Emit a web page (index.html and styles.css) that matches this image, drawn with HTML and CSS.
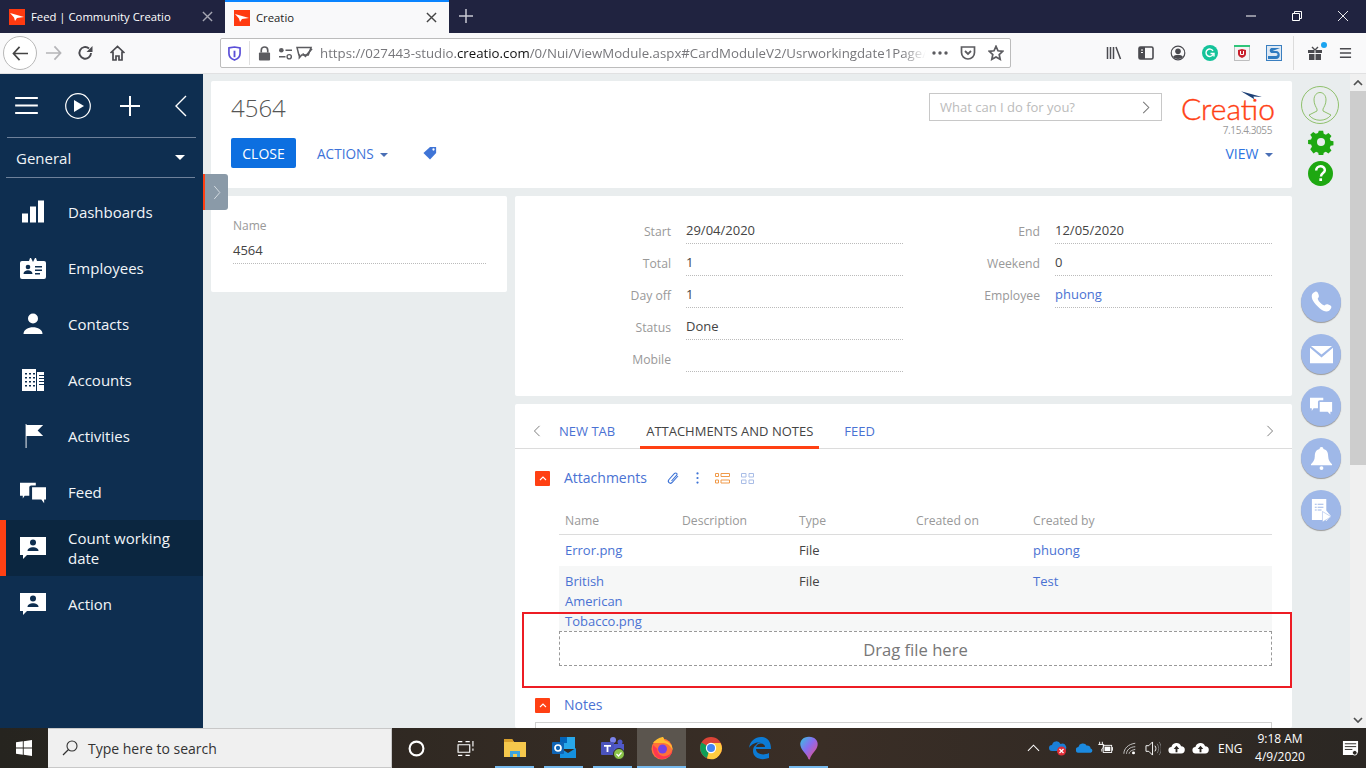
FILE: index.html
```html
<!DOCTYPE html>
<html lang="en">
<head>
    <meta charset="UTF-8">
    <meta name="viewport" content="width=device-width, initial-scale=1.0">
    <title>Creatio</title>
    <link rel="stylesheet" href="styles.css">
</head>
<body>
<div class="screen">
    <!-- browser tabs -->
    <div class="tabstrip">
        <div class="tab">
            <svg class="favicon" viewBox="0 0 16 16"><rect width="16" height="16" fill="#ff3a10"/><path d="M1 4l14 4-7 1-2 3-1-3.500z" fill="#fff"/></svg>
            <span class="tab-title">Feed | Community Creatio</span>
            <svg class="tab-close" viewBox="0 0 12 12"><path d="M1 1l10 10M11 1L1 11" stroke="#a5a6b2" stroke-width="1.500"/></svg>
        </div>
        <div class="tab tab-active">
            <svg class="favicon" viewBox="0 0 16 16"><rect width="16" height="16" fill="#ff3a10"/><path d="M1 4l14 4-7 1-2 3-1-3.500z" fill="#fff"/></svg>
            <span class="tab-title">Creatio</span>
            <svg class="tab-close" viewBox="0 0 12 12"><path d="M1 1l10 10M11 1L1 11" stroke="#444" stroke-width="1.500"/></svg>
        </div>
        <svg class="tab-new" viewBox="0 0 14 14"><path d="M7 0v14M0 7h14" stroke="#c8c9d2" stroke-width="1.500"/></svg>
        <div class="window-btns">
            <svg viewBox="0 0 10 10"><path d="M0 5h10" stroke="#fff"/></svg>
            <svg viewBox="0 0 10 10"><path d="M.5 2.500h7v7h-7zM2.500 2.500v-2h7v7h-2" fill="none" stroke="#fff"/></svg>
            <svg viewBox="0 0 10 10"><path d="M0 0l10 10M10 0L0 10" stroke="#fff" stroke-width=".9"/></svg>
        </div>
    </div>

    <!-- browser toolbar -->
    <div class="toolbar">
        <div class="back-btn">
            <svg viewBox="0 0 18 16"><path d="M8 1L1.500 8 8 15M2 8h15" fill="none" stroke="#444" stroke-width="1.800"/></svg>
        </div>
        <svg class="tool tool-fwd" viewBox="0 0 18 16"><path d="M10 1l6.500 7L10 15M16 8H1" fill="none" stroke="#b5b5b8" stroke-width="1.800"/></svg>
        <svg class="tool tool-reload" viewBox="0 0 16 16"><path d="M13.500 8A5.800 5.800 0 1 1 11.500 3.500" fill="none" stroke="#4a4a4f" stroke-width="1.900"/><path d="M15 1v6H9z" fill="#4a4a4f"/></svg>
        <svg class="tool tool-home" viewBox="0 0 16 16"><path d="M1 8l7-6.500L15 8M3.500 6.500V15h3v-4h3v4h3V6.500" fill="none" stroke="#4a4a4f" stroke-width="1.700"/></svg>
        <div class="urlbar">
            <svg class="url-icon shield" viewBox="0 0 14 16"><path d="M1 2l6-1 6 1v6c0 4-3 6-6 7-3-1-6-3-6-7z" fill="#fff" stroke="#5b4fd8" stroke-width="1.800"/><path d="M6 5h2v7H6z" fill="#5b4fd8"/></svg>
            <span class="url-sep"></span>
            <svg class="url-icon lock" viewBox="0 0 14 16"><path d="M3.500 7V4.500a3.500 3.500 0 0 1 7 0V7" fill="none" stroke="#5c5c60" stroke-width="1.800"/><rect x="1" y="7" width="12" height="8.500" rx="1" fill="#5c5c60"/></svg>
            <svg class="url-icon perms" viewBox="0 0 16 14"><circle cx="3.500" cy="3.500" r="2.500" fill="#5c5c60"/><path d="M8 3.500h7M1 10.500h7" stroke="#5c5c60" stroke-width="1.600"/><circle cx="12" cy="10.500" r="2.300" fill="none" stroke="#5c5c60" stroke-width="1.500"/></svg>
            <svg class="url-icon chat" viewBox="0 0 18 16"><path d="M1 1.500h15l-3 8H6l-2.500 3v-3H3z" fill="none" stroke="#5c5c60" stroke-width="1.600"/><path d="M7 8l3 3 7-8" fill="none" stroke="#5c5c60" stroke-width="1.800"/></svg>
            <span class="url-text">https://027443-studio.<b>creatio.com</b>/0/Nui/ViewModule.aspx#CardModuleV2/Usrworkingdate1Page/</span>
            <svg class="url-icon dots" viewBox="0 0 16 4"><circle cx="2" cy="2" r="1.700"/><circle cx="8" cy="2" r="1.700"/><circle cx="14" cy="2" r="1.700"/></svg>
            <svg class="url-icon pocket" viewBox="0 0 16 14"><path d="M1.500 1h13v5.500a6.500 6.500 0 0 1-13 0z" fill="none" stroke="#5c5c60" stroke-width="1.700"/><path d="M5 5l3 3 3-3" fill="none" stroke="#5c5c60" stroke-width="1.800"/></svg>
            <svg class="url-icon star" viewBox="0 0 16 16"><path d="M8 1.300l2 4.500 4.800.5-3.600 3.200 1 4.800L8 12l-4.200 2.300 1-4.800L1.200 6.300 6 5.800z" fill="none" stroke="#5c5c60" stroke-width="1.700"/></svg>
        </div>
        <div class="tool-right">
            <svg class="slot" viewBox="0 0 16 14"><path d="M1.500 1v12M4.500 1v12M7.500 1v12M10 1l4.500 12" stroke="#4a4a4f" stroke-width="1.500" fill="none"/></svg>
            <svg class="slot" viewBox="0 0 16 14"><rect x="1" y="1" width="14" height="12" rx="1.500" fill="none" stroke="#4a4a4f" stroke-width="1.600"/><path d="M1 1h6v12H1z" fill="#4a4a4f"/><path d="M3 4h2M3 6.500h2" stroke="#fff"/></svg>
            <svg class="slot" viewBox="0 0 16 16"><circle cx="8" cy="8" r="6.800" fill="none" stroke="#4a4a4f" stroke-width="1.200"/><circle cx="8" cy="6.300" r="2.800" fill="#4a4a4f"/><path d="M3 12c1.500-3 8.500-3 10 0-2 2.500-8 2.500-10 0z" fill="#4a4a4f"/></svg>
            <svg class="slot" viewBox="0 0 16 16"><circle cx="8" cy="8" r="8" fill="#15c39a"/><path d="M11 9.500A3.700 3.700 0 1 1 11 6M8.500 8.500H12v3" fill="none" stroke="#fff" stroke-width="1.400"/></svg>
            <svg class="slot" viewBox="0 0 16 16"><rect x=".5" y=".5" width="15" height="15" fill="#f4f4f4" stroke="#999" stroke-width=".6"/><rect width="16" height="2" fill="#2fc57a"/><path d="M4 5l4-1 4 1v4c0 2-2 3-4 4-2-1-4-2-4-4z" fill="#c8202c"/><path d="M6.500 6v3.500h3V6" fill="none" stroke="#fff"/></svg>
            <svg class="slot" viewBox="0 0 16 16"><rect width="16" height="16" fill="#3a7fc0"/><rect x="1" y="1" width="14" height="14" fill="#dfe9f3"/><path d="M14 3H6C3 3 3 8 6 8h4c2 0 2 3 0 3H2v3h8c5 0 5-8 0-8H6.500" fill="#2f7bc0"/></svg>
            <span class="tool-sep"></span>
            <div class="gift">
                <svg viewBox="0 0 16 16"><path d="M1 5h6.500v3H1zM8.500 5H15v3H8.500zM2 9h5.500v6H2zM8.500 9H14v6H8.500z" fill="#4a4a4f"/><path d="M8 5L5 2M8 5l3-3" stroke="#4a4a4f" stroke-width="1.400"/></svg>
                <span class="gift-dot"></span>
            </div>
            <svg class="slot slot-menu" viewBox="0 0 14 12"><path d="M1 1.500h12M1 6h12M1 10.500h12" stroke="#4a4a4f" stroke-width="1.600"/></svg>
        </div>
    </div>

    <!-- application -->
    <div class="app">
        <aside class="sidebar">
            <div class="side-top">
                <svg class="st-burger" viewBox="0 0 24 18"><path d="M0 1h24M0 9h24M0 17h24" stroke="#fff" stroke-width="2"/></svg>
                <svg class="st-play" viewBox="0 0 26 26"><circle cx="13" cy="13" r="12.300" fill="none" stroke="#fff" stroke-width="1.200"/><path d="M9 7l10 6-10 6z" fill="#fff"/></svg>
                <svg class="st-plus" viewBox="0 0 20 20"><path d="M10 0v20M0 10h20" stroke="#fff" stroke-width="2"/></svg>
                <svg class="st-back" viewBox="0 0 12 22"><path d="M11 1L1 11l10 10" fill="none" stroke="#fff" stroke-width="1.400"/></svg>
            </div>
            <div class="workplace">
                <span>General</span>
                <i class="caret caret-white"></i>
            </div>
            <nav class="nav">
                <a class="nav-item">
                    <svg viewBox="0 0 24 24"><path d="M1 14h6v9H1zM9 7h6v16H9zM17 1h6v22h-6z" fill="#fff" transform="translate(0 -.5)"/></svg>
                    <span>Dashboards</span>
                </a>
                <a class="nav-item">
                    <svg viewBox="0 0 26 24"><path d="M2 5h7l1-3h6l1 3h7a2 2 0 0 1 2 2v14a2 2 0 0 1-2 2H2a2 2 0 0 1-2-2V7a2 2 0 0 1 2-2z" fill="#fff"/><path d="M11 2h4l-2 4z" fill="#0e2e50"/><circle cx="8" cy="11" r="2.300" fill="#0e2e50"/><path d="M3.500 18c0-5 9-5 9 0zM15 10h7v1.500h-7zM15 13.500h7V15h-7zM15 17h5v1.500h-5z" fill="#0e2e50"/></svg>
                    <span>Employees</span>
                </a>
                <a class="nav-item">
                    <svg viewBox="0 0 24 24"><circle cx="12" cy="6.500" r="5" fill="#fff"/><path d="M2.500 22c0-9 19-9 19 0z" fill="#fff"/></svg>
                    <span>Contacts</span>
                </a>
                <a class="nav-item">
                    <svg viewBox="0 0 24 24"><path d="M1 1h14v22H1zM16 4h7v19h-7z" fill="#fff"/><path d="M4 5h2v1.500H4zM8 5h2v1.500H8zM12 5h2v1.500h-2zM4 9h2v1.500H4zM8 9h2v1.500H8zM12 9h2v1.500h-2zM4 13h2v1.500H4zM8 13h2v1.500H8zM12 13h2v1.500h-2zM4 17h2v1.500H4zM8 17h2v1.500H8zM12 17h2v1.500h-2zM18 7h5v1H18zM18 10h5v1H18zM18 13h5v1H18zM18 16h5v1H18z" fill="#0e2e50"/></svg>
                    <span>Accounts</span>
                </a>
                <a class="nav-item">
                    <svg viewBox="0 0 24 26"><path d="M4 0h1v26H4zM5 1h18l-6 6 6 6H5z" fill="#fff"/></svg>
                    <span>Activities</span>
                </a>
                <a class="nav-item">
                    <svg viewBox="0 0 28 24"><path d="M0 2h17v3h-5a2 2 0 0 0-2 2v9H5l-2 3v-3H0z" fill="#fff"/><path d="M13 7h15v13h-2v4l-3-4H13z" fill="#fff"/></svg>
                    <span>Feed</span>
                </a>
                <a class="nav-item nav-active">
                    <svg viewBox="0 0 26 24"><path d="M0 1h26v18H7l-4 4v-4H0z" fill="#fff"/><circle cx="13" cy="6.500" r="3" fill="#0e2e50"/><path d="M7.500 15c0-5 11-5 11 0z" fill="#0e2e50"/></svg>
                    <span>Count working date</span>
                </a>
                <a class="nav-item">
                    <svg viewBox="0 0 26 24"><path d="M0 1h26v18H7l-4 4v-4H0z" fill="#fff"/><circle cx="13" cy="6.500" r="3" fill="#0e2e50"/><path d="M7.500 15c0-5 11-5 11 0z" fill="#0e2e50"/></svg>
                    <span>Action</span>
                </a>
            </nav>
        </aside>

        <main class="content">
            <div class="card page-head">
                <div class="head-left">
                    <h1>4564</h1>
                    <div class="head-actions">
                        <button class="btn-close">CLOSE</button>
                        <span class="link-btn link-actions">ACTIONS <i class="caret"></i></span>
                        <svg class="tag" viewBox="0 0 16 16"><path d="M8 1h7v7l-7 7.500L.5 8z" fill="#3f74d6"/><circle cx="12" cy="4" r="1.300" fill="#fff"/></svg>
                    </div>
                </div>
                <div class="head-right">
                    <div class="head-search">
                        <div class="search-box">
                            <span>What can I do for you?</span>
                            <svg viewBox="0 0 8 14"><path d="M1 1l6 6-6 6" fill="none" stroke="#777" stroke-width="1.100"/></svg>
                        </div>
                        <div class="logo">
                            <svg class="logo-swoosh" viewBox="0 0 22 9"><path d="M0 0l22 6-9-.5 1 3z" fill="#1c3f75"/></svg>
                            <span class="logo-text">Creatio</span>
                            <span class="logo-ver">7.15.4.3055</span>
                        </div>
                    </div>
                    <span class="link-btn link-view">VIEW <i class="caret"></i></span>
                </div>
            </div>

            <div class="card-row">
                <div class="card name-card">
                    <div class="name-label">Name</div>
                    <div class="name-value">4564</div>
                </div>
                <div class="card fields">
                    <div class="field-col">
                        <div class="field"><label>Start</label><span>29/04/2020</span></div>
                        <div class="field"><label>Total</label><span>1</span></div>
                        <div class="field"><label>Day off</label><span>1</span></div>
                        <div class="field"><label>Status</label><span>Done</span></div>
                        <div class="field"><label>Mobile</label><span></span></div>
                    </div>
                    <div class="field-col field-col-right">
                        <div class="field"><label>End</label><span>12/05/2020</span></div>
                        <div class="field"><label>Weekend</label><span>0</span></div>
                        <div class="field"><label>Employee</label><span class="link">phuong</span></div>
                    </div>
                </div>
            </div>

            <div class="card tabs-card">
                <div class="tabs">
                    <svg class="tabs-arrow" viewBox="0 0 8 14"><path d="M7 1L1 7l6 6" fill="none" stroke="#777" stroke-width="1.100"/></svg>
                    <span class="tabs-item tabs-first">NEW TAB</span>
                    <span class="tabs-item tabs-on">ATTACHMENTS AND NOTES</span>
                    <span class="tabs-item">FEED</span>
                    <svg class="tabs-arrow tabs-next" viewBox="0 0 8 14"><path d="M1 1l6 6-6 6" fill="none" stroke="#777" stroke-width="1.100"/></svg>
                </div>

                <div class="group-head">
                    <span class="toggle"><svg viewBox="0 0 8 5"><path d="M1 4l3-3 3 3" fill="none" stroke="#fff" stroke-width="1.100"/></svg></span>
                    <span class="group-title">Attachments</span>
                    <svg class="gi gi-clip" viewBox="0 0 14 14"><path d="M12 5L6 11.500c-2 2-5-.5-3-3L8.500 2.500c1.500-1.500 3.500.5 2 2L5.500 10" fill="none" stroke="#3f74d6" stroke-width="1.100"/></svg>
                    <svg class="gi gi-dots" viewBox="0 0 3 13"><circle cx="1.500" cy="1.500" r="1.200"/><circle cx="1.500" cy="6.500" r="1.200"/><circle cx="1.500" cy="11.500" r="1.200"/></svg>
                    <svg class="gi gi-list" viewBox="0 0 15 11"><path d="M.5.500h3v3h-3zM6 .5h8.500v3H6zM.5 7h3v3h-3zM6 7h8.500v3H6z" fill="none" stroke="#f09a4a"/></svg>
                    <svg class="gi gi-grid" viewBox="0 0 13 11"><path d="M.5.500h4.500v3.500H.5zM8 .5h4.500v3.500H8zM.5 7h4.500v3.500H.5zM8 7h4.500v3.500H8z" fill="none" stroke="#a9bde6"/></svg>
                </div>

                <div class="grid">
                    <div class="grid-row grid-head">
                        <span>Name</span><span>Description</span><span>Type</span><span>Created on</span><span>Created by</span>
                    </div>
                    <div class="grid-row">
                        <span class="link">Error.png</span><span></span><span>File</span><span></span><span class="link">phuong</span>
                    </div>
                    <div class="grid-row grid-alt">
                        <span class="link">British American Tobacco.png</span><span></span><span>File</span><span></span><span class="link">Test</span>
                    </div>
                    <div class="dropzone">Drag file here</div>
                </div>

                <div class="group-head notes-head">
                    <span class="toggle"><svg viewBox="0 0 8 5"><path d="M1 4l3-3 3 3" fill="none" stroke="#fff" stroke-width="1.100"/></svg></span>
                    <span class="group-title">Notes</span>
                </div>
                <div class="notes-box"></div>
            </div>
        </main>

        <div class="rail">
            <svg class="rail-user" viewBox="0 0 38 38"><circle cx="19" cy="19" r="18.500" fill="none" stroke="#8fc06c"/><path d="M13 14c0-10 12-10 12 0 0 4-2 7-3 9v2l8 4c-5 7-17 7-22 0l8-4v-2c-1-2-3-5-3-9z" fill="none" stroke="#8fc06c"/></svg>
            <svg class="rail-gear" viewBox="0 0 26 26"><path d="M10.500 0h5l.7 3.500 2.500 1 3-2 3.500 3.500-2 3 1 2.500 3.300.7v4.600l-3.300.7-1 2.500 2 3-3.500 3.500-3-2-2.500 1-.7 3.500h-5l-.7-3.500-2.500-1-3 2L.5 21.500l2-3-1-2.500L-2 15.300v-4.600l3.500-.7 1-2.500-2-3L4 1.500l3 2 2.500-1z" fill="#1ea811" transform="translate(1.800 1.800) scale(.86)"/><circle cx="13" cy="13" r="4" fill="#e9edee"/></svg>
            <svg class="rail-help" viewBox="0 0 26 26"><circle cx="13" cy="13" r="13" fill="#1ea811"/><path d="M8.500 10c0-6 9-6 9-.5 0 3-4 3-4 6.500" fill="none" stroke="#fff" stroke-width="2.600"/><rect x="11.800" y="18" width="2.800" height="2.800" fill="#fff"/></svg>
            <div class="rail-btns">
                <span class="round"><svg viewBox="0 0 24 24"><path d="M5 1c2-1 3 0 4 3 .7 2 0 3-1 4 1 3 4 6 7 7 1.500-1 2.500-1.500 4-1 3 1 4 2 3 4-2 4-6 5-12 0C4 13 1 8 2 4c.3-1 1.500-2.500 3-3z" fill="#fff"/></svg></span>
                <span class="round"><svg viewBox="0 0 24 18"><path d="M1 0h22L12 9z" fill="#fff"/><path d="M0 2l12 10L24 2v16H0z" fill="#fff"/></svg></span>
                <span class="round"><svg viewBox="0 0 26 20"><path d="M0 0h15v3h-4a2 2 0 0 0-2 2v7H4l-2 3v-3H0z" fill="#fff"/><path d="M11 5h14v11h-2v3l-3-3h-9z" fill="#fff"/></svg></span>
                <span class="round"><svg viewBox="0 0 22 24"><path d="M11 0c1.500 0 2 1 2 2 4 1 5 4 5 8 0 4 2 6 4 8v1H0v-1c2-2 4-4 4-8 0-4 1-7 5-8 0-1 .5-2 2-2z" fill="#fff"/><circle cx="11" cy="22" r="2" fill="#fff"/></svg></span>
                <span class="round"><svg viewBox="0 0 20 24"><path d="M0 0h15v12l5 6-5 5-1-1H0z" fill="#fff"/><path d="M3 5h2v1H3zM6 5h6v1H6zM3 8h2v1H3zM6 8h6v1H6zM3 11h2v1H3zM6 11h4v1H6z" fill="#9fb8e8"/><path d="M11 13v11l9-5.500z" fill="#fff" stroke="#9fb8e8" stroke-width=".6"/></svg></span>
            </div>
        </div>

        <div class="scrollbar">
            <svg class="sb-arrow" viewBox="0 0 10 6"><path d="M1 5l4-4 4 4" fill="none" stroke="#505050" stroke-width="1.700"/></svg>
            <div class="sb-thumb"></div>
            <svg class="sb-arrow sb-down" viewBox="0 0 10 6"><path d="M1 1l4 4 4-4" fill="none" stroke="#505050" stroke-width="1.700"/></svg>
        </div>

        <div class="handle">
            <svg viewBox="0 0 8 16"><path d="M1 1l6 7-6 7" fill="none" stroke="#d8dee3"/></svg>
        </div>
        <div class="highlight"></div>
    </div>

    <!-- windows taskbar -->
    <div class="taskbar">
        <div class="start">
            <svg viewBox="0 0 16 16"><path d="M0 2.300l6.800-1v6.300H0zM7.700 1.200L16 0v7.600H7.700zM0 8.400h6.800v6.300l-6.800-1zM7.700 8.400H16V16l-8.300-1.200z" fill="#fff"/></svg>
        </div>
        <div class="task-search">
            <svg viewBox="0 0 16 16"><circle cx="10" cy="6" r="5" fill="none" stroke="#333" stroke-width="1.100"/><path d="M6.500 9.500L1 15" stroke="#333" stroke-width="1.200"/></svg>
            <span>Type here to search</span>
        </div>
        <div class="task-slot">
            <svg class="ts-16" viewBox="0 0 16 16"><circle cx="8" cy="8" r="6.500" fill="none" stroke="#fff" stroke-width="2"/></svg>
        </div>
        <div class="task-slot">
            <svg class="ts-16" viewBox="0 0 16 16"><path d="M1 4.500h11v7H1zM1 1.500h4M8 1.500h4M1 14.500h4M8 14.500h4M15 1v5M15 8v2" fill="none" stroke="#fff" stroke-width="1.100"/></svg>
        </div>
        <div class="task-slot running">
            <svg viewBox="0 0 24 24"><path d="M1 3h8l2 3h12v15H1z" fill="#f5c84c"/><path d="M1 3h8l2 3H1z" fill="#d9a02b"/><path d="M7 15h10v6h-3v-3h-4v3H7z" fill="#3fa3dc"/></svg>
        </div>
        <div class="task-slot running">
            <svg viewBox="0 0 24 24"><path d="M8 1h15v12H8z" fill="#28a8ea"/><path d="M8 1h7v6H8z" fill="#0364b8"/><path d="M8 12l8 5 8-5v10H8z" fill="#1490df"/><rect x="0" y="6" width="12" height="12" rx="1" fill="#0f64b4"/><circle cx="6" cy="12" r="3" fill="none" stroke="#fff" stroke-width="1.700"/></svg>
        </div>
        <div class="task-slot running">
            <svg viewBox="0 0 24 24"><circle cx="12" cy="4" r="3" fill="#7b83eb"/><circle cx="19" cy="6" r="2.500" fill="#5059c9"/><path d="M9 8h14v9H9z" fill="#5059c9"/><rect x="0" y="6" width="13" height="13" rx="1" fill="#4b53bc"/><path d="M3 9h7v1.700H7.400V16H5.600v-5.300H3z" fill="#fff"/><circle cx="18" cy="18" r="5.500" fill="#8bc34a" stroke="#2b2723"/><path d="M15.500 18l2 2 3-3.500" fill="none" stroke="#fff" stroke-width="1.200"/></svg>
        </div>
        <div class="task-slot running task-on">
            <svg viewBox="0 0 24 24"><circle cx="12" cy="13" r="10.500" fill="#ff7139"/><path d="M3 7c3-4 8-6 10-6 2 2 0 3 3 4 4 1 7 6 6.500 9C20 8 16 7 12 7z" fill="#ffbd30"/><path d="M3 9c-1 6 2 14 9 14 6 0 10-4 10.500-9-2 5-6 7-10 6-3-1-6-4-5-7z" fill="#ff3750"/><circle cx="12.500" cy="13" r="4.500" fill="#7542e5"/></svg>
        </div>
        <div class="task-slot">
            <svg viewBox="0 0 24 24"><circle cx="12" cy="12" r="11" fill="#db4437"/><path d="M12 12L2.500 6.500A11 11 0 0 0 8 22z" fill="#0f9d58"/><path d="M12 7h9.500A11 11 0 0 1 8 22.500z" fill="#ffcd40"/><circle cx="12" cy="12" r="5.200" fill="#fff"/><circle cx="12" cy="12" r="4" fill="#4285f4"/></svg>
        </div>
        <div class="task-slot">
            <svg viewBox="0 0 24 24"><path d="M1 12C2 5 7 1 13 1c6 0 10 4 10 12H8c0 5 7 7 13 4v5c-8 3-16 0-16-7 0-3 1-5 3-6 1-2 3-3 5-3-4 0-10 2-12 6zm7-1h9c0-4-7-5-9 0z" fill="#0c7bd4"/></svg>
        </div>
        <div class="task-slot running">
            <svg viewBox="0 0 24 28"><defs><linearGradient id="pt" x1="0" y1="0" x2="1" y2="1"><stop offset="0" stop-color="#33c5e0"/><stop offset=".45" stop-color="#8a6cf0"/><stop offset="1" stop-color="#f24c7c"/></linearGradient></defs><path d="M12 1c7 0 11 5 10 10-1 6-7 9-9 16-1 1-2 0-2-1C9 20 3 17 2 11 1 6 5 1 12 1z" fill="url(#pt)"/></svg>
        </div>
        <div class="tray">
            <svg class="tr-caret" viewBox="0 0 14 8"><path d="M1 7l6-6 6 6" fill="none" stroke="#fff" stroke-width="1.100"/></svg>
            <svg class="tr-cloud" viewBox="0 0 18 16"><path d="M3 11a3 3 0 0 1 0-6 4.500 4.500 0 0 1 8.500-1A3.500 3.500 0 0 1 15 11z" fill="#1b7fd6"/><circle cx="12.500" cy="11" r="4.500" fill="#e02c36"/><path d="M10.500 9l4 4M14.500 9l-4 4" stroke="#fff" stroke-width="1.200"/></svg>
            <svg class="tr-one" viewBox="0 0 18 12"><path d="M3 11a3 3 0 0 1-.5-6A5 5 0 0 1 11.500 3.500 3.800 3.800 0 0 1 15.500 6.500 2.300 2.300 0 0 1 15.500 11z" fill="#1b8ae0"/></svg>
            <svg class="tr-batt" viewBox="0 0 18 14"><path d="M3 0v3M6 0v3M1.500 3h6v3l-2 2v3" fill="none" stroke="#fff" stroke-width="1.100"/><rect x="7" y="4" width="9.500" height="8" fill="none" stroke="#fff"/><rect x="8.500" y="5.500" width="6.500" height="5" fill="#fff"/><rect x="17" y="6" width="1" height="4" fill="#fff"/></svg>
            <svg class="tr-wifi" viewBox="0 0 16 14"><path d="M1 13C1 7 6 2 14 1M4 13c0-4 4-8 10-8M7 13c0-2 2-4 7-5" fill="none" stroke="#d6d6d6"/><circle cx="12" cy="12" r="1.700" fill="#fff"/></svg>
            <svg class="tr-vol" viewBox="0 0 17 16"><path d="M1 5h3l4-4v14l-4-4H1z" fill="none" stroke="#fff"/><path d="M10.500 5c1.500 2 1.500 4 0 6" fill="none" stroke="#fff"/><path d="M13 3c2 3 2 7 0 10M15 1c3 4 3 10 0 14" fill="none" stroke="#7a7a7a"/></svg>
            <svg class="tr-up" viewBox="0 0 18 13"><path d="M4 12.500a3.500 3.500 0 0 1-.5-7 5.500 5.500 0 0 1 10.500-1 4 4 0 0 1 0 8z" fill="#fff"/><path d="M9 4l3 3.500h-2V11H8V7.500H6z" fill="#2b2723"/></svg>
            <svg class="tr-up" viewBox="0 0 18 13"><path d="M4 12.500a3.500 3.500 0 0 1-.5-7 5.500 5.500 0 0 1 10.500-1 4 4 0 0 1 0 8z" fill="#fff"/><path d="M9 4l3 3.500h-2V11H8V7.500H6z" fill="#2b2723"/></svg>
            <span class="tr-lang">ENG</span>
            <div class="tr-clock"><span>9:18 AM</span><span>4/9/2020</span></div>
            <svg class="tr-note" viewBox="0 0 18 18"><path d="M1 1h16v12l-4 3H1z" fill="#fff"/><path d="M3 4h12M3 7h12M3 10h8" stroke="#2b2723"/><circle cx="13.500" cy="13.500" r="2.500" fill="#2b2723" stroke="#fff"/></svg>
        </div>
    </div>
</div>
</body>
</html>
```

FILE: styles.css
```css
* {
    box-sizing: border-box;
}

html, body {
    margin: 0;
    height: 100%;
    overflow: hidden;
}

body {
    font-family: 'Open Sans', 'Liberation Sans', sans-serif;
    font-size: 13px;
    color: #444;
}

.screen {
    width: 1366px;
    height: 768px;
    display: flex;
    flex-direction: column;
    overflow: hidden;
}

/* browser tabs */
.tabstrip {
    height: 33px;
    background: #202340;
    display: flex;
    flex-shrink: 0;
}

.tab {
    width: 225px;
    display: flex;
    align-items: center;
    padding-left: 9px;
    color: #fff;
    font-size: 11.3px;
}

.tab-active {
    width: 224px;
    background: #f9f9fa;
    border-top: 2px solid #0a84ff;
    color: #222;
}

.favicon {
    width: 16px;
    height: 16px;
    margin-right: 6px;
}

.tab-title {
    flex: 1;
}

.tab-close {
    width: 11px;
    height: 11px;
    margin-right: 12px;
}

.tab-new {
    width: 14px;
    height: 14px;
    margin: 9px 0 0 10px;
}

.window-btns {
    margin-left: auto;
    display: flex;
    padding-top: 11px;
    padding-right: 18px;
    gap: 36px;
}

.window-btns svg {
    width: 10px;
    height: 10px;
}

/* browser toolbar */
.toolbar {
    height: 41px;
    background: #f9f9fa;
    border-bottom: 1px solid #e1e1e2;
    display: flex;
    align-items: center;
    flex-shrink: 0;
    padding-left: 3px;
}

.back-btn {
    width: 34px;
    height: 34px;
    border: 1px solid #b8b8b8;
    border-radius: 50%;
    background: #fff;
    display: flex;
    align-items: center;
    justify-content: center;
}

.back-btn svg {
    width: 17px;
    height: 15px;
}

.tool {
    height: 16px;
    width: 17px;
}

.tool-fwd {
    margin-left: 8px;
}

.tool-reload {
    margin-left: 15px;
}

.tool-home {
    margin-left: 15px;
}

.urlbar {
    width: 791px;
    height: 30px;
    margin-left: 94px;
    background: #fff;
    border: 1px solid #bcbcbc;
    border-radius: 2px;
    display: flex;
    align-items: center;
    padding-left: 7px;
}

.url-icon {
    flex-shrink: 0;
}

.shield {
    width: 13px;
    height: 15px;
}

.url-sep {
    width: 1px;
    height: 24px;
    background: #e0e0e0;
    margin: 0 8px;
}

.lock {
    width: 13px;
    height: 15px;
    margin-right: 7px;
}

.perms {
    width: 15px;
    height: 13px;
    margin-right: 3px;
}

.chat {
    width: 17px;
    height: 15px;
    margin-right: 7px;
}

.url-text {
    width: 606px;
    flex-shrink: 0;
    overflow: hidden;
    white-space: nowrap;
    color: #77777b;
    font-size: 13.25px;
    -webkit-mask-image: linear-gradient(to right, #000 96%, transparent);
    mask-image: linear-gradient(to right, #000 96%, transparent);
}

.url-text b {
    font-weight: normal;
    color: #111;
}

.dots {
    width: 16px;
    height: 4px;
    fill: #5c5c60;
    margin-left: 6px;
}

.pocket {
    width: 16px;
    height: 14px;
    margin-left: 12px;
}

.star {
    width: 16px;
    height: 16px;
    margin-left: 12px;
}

.tool-right {
    display: flex;
    align-items: center;
    margin-left: 95px;
}

.slot {
    width: 16px;
    height: 16px;
    margin-right: 16px;
}

.tool-sep {
    width: 1px;
    height: 34px;
    background: #dcdcdc;
    margin: 0 13px 0 -5px;
}

.gift {
    width: 16px;
    height: 16px;
    position: relative;
    margin-right: 16px;
}

.gift svg {
    width: 16px;
    height: 16px;
    display: block;
}

.gift-dot {
    position: absolute;
    top: -3px;
    right: -4px;
    width: 6px;
    height: 6px;
    border-radius: 50%;
    background: #1aa3f0;
}

.slot-menu {
    width: 13px;
    height: 12px;
    margin: 0;
}

/* application */
.app {
    flex: 1;
    min-height: 0;
    display: flex;
    background: #e9edee;
    position: relative;
    overflow: hidden;
}

.sidebar {
    width: 203px;
    background: #0e2e50;
    color: #fff;
    flex-shrink: 0;
}

.side-top {
    height: 64px;
    margin: 0 7px;
    border-bottom: 1px solid #6e819a;
    display: flex;
    align-items: center;
}

.side-top svg {
    flex-shrink: 0;
}

.st-burger {
    width: 23px;
    height: 17px;
    margin-left: 8px;
}

.st-play {
    width: 26px;
    height: 26px;
    margin-left: 27px;
}

.st-plus {
    width: 20px;
    height: 20px;
    margin-left: 29px;
}

.st-back {
    width: 12px;
    height: 22px;
    margin-left: 35px;
}

.workplace {
    height: 40px;
    margin: 0 8px 6px 6px;
    padding: 0 10px;
    border-bottom: 1px solid #6e819a;
    display: flex;
    align-items: center;
    justify-content: space-between;
    font-size: 15px;
    color: #f0f3f6;
}

.caret {
    display: inline-block;
    width: 0;
    height: 0;
    border-left: 4px solid transparent;
    border-right: 4px solid transparent;
    border-top: 4px solid #4a6fb5;
    vertical-align: 2px;
    margin-left: 3px;
}

.caret-white {
    border-left-width: 5px;
    border-right-width: 5px;
    border-top: 5px solid #fff;
}

.nav-item {
    height: 56px;
    display: flex;
    align-items: center;
    padding-left: 20px;
    font-size: 15px;
    line-height: 20px;
    color: #f2f5f8;
}

.nav-item svg {
    width: 26px;
    height: 24px;
    flex-shrink: 0;
    margin-right: 22px;
}

.nav-active {
    background: #0b2640;
    border-left: 6px solid #ff4013;
    padding-left: 14px;
}

.content {
    width: 1089px;
    padding: 7px 0 0 8px;
    flex-shrink: 0;
    display: flex;
    flex-direction: column;
    gap: 8px;
}

.card {
    background: #fff;
    border-radius: 2px;
}

.page-head {
    height: 107px;
    display: flex;
    justify-content: space-between;
    flex-shrink: 0;
    padding: 0 18px 0 20px;
}

h1 {
    margin: 0;
    font-weight: 300;
    font-size: 24px;
    line-height: 32px;
    padding-top: 11px;
    color: #555;
    height: 57px;
}

.head-actions {
    display: flex;
    align-items: center;
    height: 30px;
}

.btn-close {
    width: 65px;
    height: 30px;
    background: #0d6fe0;
    border: none;
    border-radius: 2px;
    color: #fff;
    font: 14px 'Open Sans', sans-serif;
    padding: 0;
}

.link-btn {
    color: #3d72d8;
    font-size: 14px;
}

.link-actions {
    margin-left: 21px;
    font-size: 13.6px;
}

.tag {
    width: 14px;
    height: 14px;
    margin-left: 35px;
}

.head-right {
    display: flex;
    flex-direction: column;
    align-items: flex-end;
}

.head-search {
    display: flex;
    margin-top: 12px;
}

.search-box {
    width: 233px;
    height: 28px;
    border: 1px solid #c8c8c8;
    display: flex;
    align-items: center;
    justify-content: space-between;
    padding: 0 11px 0 10px;
    color: #bbb;
    font-size: 13px;
}

.search-box svg {
    width: 8px;
    height: 13px;
}

.logo {
    width: 92px;
    margin-left: 20px;
    display: flex;
    flex-direction: column;
    align-items: flex-end;
    position: relative;
}

.logo-swoosh {
    position: absolute;
    top: -2px;
    left: 59px;
    width: 21px;
    height: 9px;
}

.logo-text {
    font-family: 'Lato', sans-serif;
    font-weight: 300;
    font-size: 30px;
    line-height: 28px;
    color: #ff3f14;
    margin: 1px -1px 0 0;
    -webkit-text-stroke: .4px #ff3f14;
}

.logo-ver {
    font-size: 10px;
    letter-spacing: -.4px;
    color: #9a9a9a;
    line-height: 12px;
    margin: 2px 2px 0 0;
}

.link-view {
    margin-top: 8px;
    margin-right: 1px;
    color: #2e74e0;
}

.card-row {
    display: flex;
    gap: 8px;
    flex-shrink: 0;
    height: 200px;
}

.name-card {
    width: 296px;
    height: 96px;
    padding: 22px 21px 0 22px;
}

.name-label {
    font-size: 12px;
    color: #999;
    line-height: 16px;
}

.name-value {
    margin-top: 5px;
    height: 25px;
    line-height: 22px;
    border-bottom: 1px dotted #bbb;
    color: #444;
}

.fields {
    width: 777px;
    display: grid;
    grid-template-columns: 388px 369px;
    padding-top: 19px;
}

.field {
    height: 32px;
    display: flex;
}

.field label {
    width: 156px;
    text-align: right;
    color: #999;
    font-size: 12.2px;
    line-height: 34px;
}

.field-col-right .field label {
    width: 137px;
}

.field span {
    width: 217px;
    margin-left: 15px;
    border-bottom: 1px dotted #bbb;
    line-height: 30px;
    height: 29px;
}

.link {
    color: #4a72d3;
}

.tabs-card {
    width: 777px;
    margin-left: 304px;
    flex: 1;
    min-height: 0;
    display: flex;
    flex-direction: column;
    padding: 0 20px;
    overflow: hidden;
}

.tabs {
    height: 45px;
    flex-shrink: 0;
    border-bottom: 1px solid #dcdcdc;
    display: flex;
    align-items: center;
    margin: 0 -20px;
    padding: 0 18px;
}

.tabs-arrow {
    width: 8px;
    height: 12px;
    flex-shrink: 0;
    margin-top: 10px;
}

.tabs-item {
    font-size: 13px;
    color: #4a72d3;
    height: 45px;
    line-height: 55px;
    padding: 0 6px;
    margin-right: 19px;
}

.tabs-first {
    margin-left: 12px;
}

.tabs-on {
    color: #444;
    border-bottom: 3px solid #ff4013;
}

.tabs-next {
    margin-left: auto;
}

.group-head {
    display: flex;
    align-items: center;
    height: 16px;
    margin-top: 21px;
    flex-shrink: 0;
}

.toggle {
    width: 15px;
    height: 15px;
    background: #ff4013;
    border-radius: 1px;
    display: flex;
    align-items: center;
    justify-content: center;
}

.toggle svg {
    width: 8px;
    height: 5px;
}

.group-title {
    font-size: 14px;
    color: #4a72d3;
    margin: -2px 0 0 14px;
}

.gi {
    flex-shrink: 0;
}

.gi-clip {
    width: 14px;
    height: 14px;
    margin-left: 19px;
}

.gi-dots {
    width: 3px;
    height: 12px;
    margin-left: 16px;
    fill: #3f74d6;
}

.gi-list {
    width: 15px;
    height: 11px;
    margin-left: 16px;
}

.gi-grid {
    width: 13px;
    height: 11px;
    margin-left: 11px;
}

.grid {
    margin: 20px 0 0 24px;
    width: 713px;
    flex-shrink: 0;
}

.grid-row {
    display: grid;
    grid-template-columns: repeat(5, 117px);
    padding: 5px 6px;
    line-height: 20px;
    height: 31px;
}

.grid-row span {
    padding-right: 20px;
}

.grid-head {
    height: 29px;
    color: #999;
    font-size: 12.2px;
    white-space: nowrap;
    border-bottom: 1px solid #dcdcdc;
}

.grid-alt {
    background: #f6f7f7;
    height: 65px;
}

.dropzone {
    height: 35px;
    border: 1px dashed #999;
    text-align: center;
    font-size: 16.6px;
    line-height: 35px;
    color: #777;
}

.notes-head {
    margin-top: 31px;
}

.notes-box {
    height: 30px;
    margin-top: 9px;
    border: 1px solid #d0d0d0;
    flex-shrink: 0;
}

/* right rail */
.rail {
    width: 58px;
    flex-shrink: 0;
    display: flex;
    flex-direction: column;
    align-items: center;
    padding-top: 12px;
}

.rail-user {
    width: 38px;
    height: 38px;
    margin-left: -3px;
}

.rail-gear {
    width: 26px;
    height: 26px;
    margin-top: 5px;
    margin-left: -1px;
}

.rail-help {
    width: 25px;
    height: 25px;
    margin-top: 6px;
    margin-left: -1px;
}

.rail-btns {
    display: flex;
    flex-direction: column;
    gap: 12px;
    margin-top: 96px;
}

.round {
    width: 40px;
    height: 40px;
    border-radius: 50%;
    background: #9fb8e8;
    box-shadow: 0 1px 1px #9a9a9a;
    display: flex;
    align-items: center;
    justify-content: center;
}

.round svg {
    width: 23px;
    height: 23px;
}

.scrollbar {
    width: 16px;
    flex-shrink: 0;
    background: #f0f0f0;
    display: flex;
    flex-direction: column;
    align-items: center;
}

.sb-arrow {
    width: 10px;
    height: 6px;
    margin: 6px 0 5px;
    flex-shrink: 0;
}

.sb-thumb {
    width: 16px;
    height: 374px;
    background: #cdcdcd;
}

.sb-down {
    margin: auto 0 5px;
}

.handle {
    position: absolute;
    left: 203px;
    top: 100px;
    width: 25px;
    height: 36px;
    background: #8a9aa8;
    border-left: 2px solid #ff4013;
    border-radius: 0 3px 3px 0;
    display: flex;
    align-items: center;
    justify-content: center;
}

.handle svg {
    width: 8px;
    height: 15px;
}

.highlight {
    position: absolute;
    left: 522px;
    top: 538px;
    width: 770px;
    height: 76px;
    border: 2px solid #ed1c24;
}

/* windows taskbar */
.taskbar {
    height: 40px;
    flex-shrink: 0;
    background: linear-gradient(to right, #26241f, #3a2e26 60%, #2b2723);
    display: flex;
    align-items: stretch;
}

.start {
    width: 48px;
    display: flex;
    align-items: center;
    justify-content: center;
}

.start svg {
    width: 16px;
    height: 16px;
}

.task-search {
    width: 344px;
    background: #f0f0f0;
    border: 1px solid #c8c8c8;
    border-width: 1px 1px 1px 0;
    display: flex;
    align-items: center;
    padding-left: 14px;
    font-size: 14px;
    color: #333;
}

.task-search svg {
    width: 16px;
    height: 16px;
    margin-right: 10px;
}

.task-slot {
    width: 49px;
    display: flex;
    align-items: center;
    justify-content: center;
    position: relative;
}

.task-slot svg {
    width: 24px;
    height: 24px;
}

.task-slot .ts-16 {
    width: 17px;
    height: 17px;
}

.running::after {
    content: "";
    position: absolute;
    left: 5px;
    right: 5px;
    bottom: 0;
    height: 2px;
    background: #76b9ed;
}

.task-on {
    background: #5b554e;
}

.task-on::after {
    left: 0;
    right: 0;
}

.tray {
    margin-left: auto;
    width: 341px;
    display: flex;
    align-items: center;
    color: #fff;
}

.tray svg {
    flex-shrink: 0;
}

.tr-caret {
    width: 13px;
    height: 8px;
    margin-left: 2px;
}

.tr-cloud {
    width: 18px;
    height: 16px;
    margin-left: 9px;
}

.tr-one {
    width: 17px;
    height: 12px;
    margin-left: 9px;
}

.tr-batt {
    width: 16px;
    height: 14px;
    margin-left: 4px;
}

.tr-wifi {
    width: 14px;
    height: 13px;
    margin-left: 10px;
}

.tr-vol {
    width: 16px;
    height: 15px;
    margin-left: 8px;
}

.tr-up {
    width: 17px;
    height: 12px;
    margin-left: 7px;
}

.tr-lang {
    font-size: 12px;
    margin-left: 9px;
    width: 24px;
}

.tr-clock {
    display: flex;
    flex-direction: column;
    align-items: center;
    width: 60px;
    margin-left: 8px;
    font-size: 12px;
    line-height: 18px;
}

.tr-note {
    width: 17px;
    height: 17px;
    margin-left: 32px;
}
```
